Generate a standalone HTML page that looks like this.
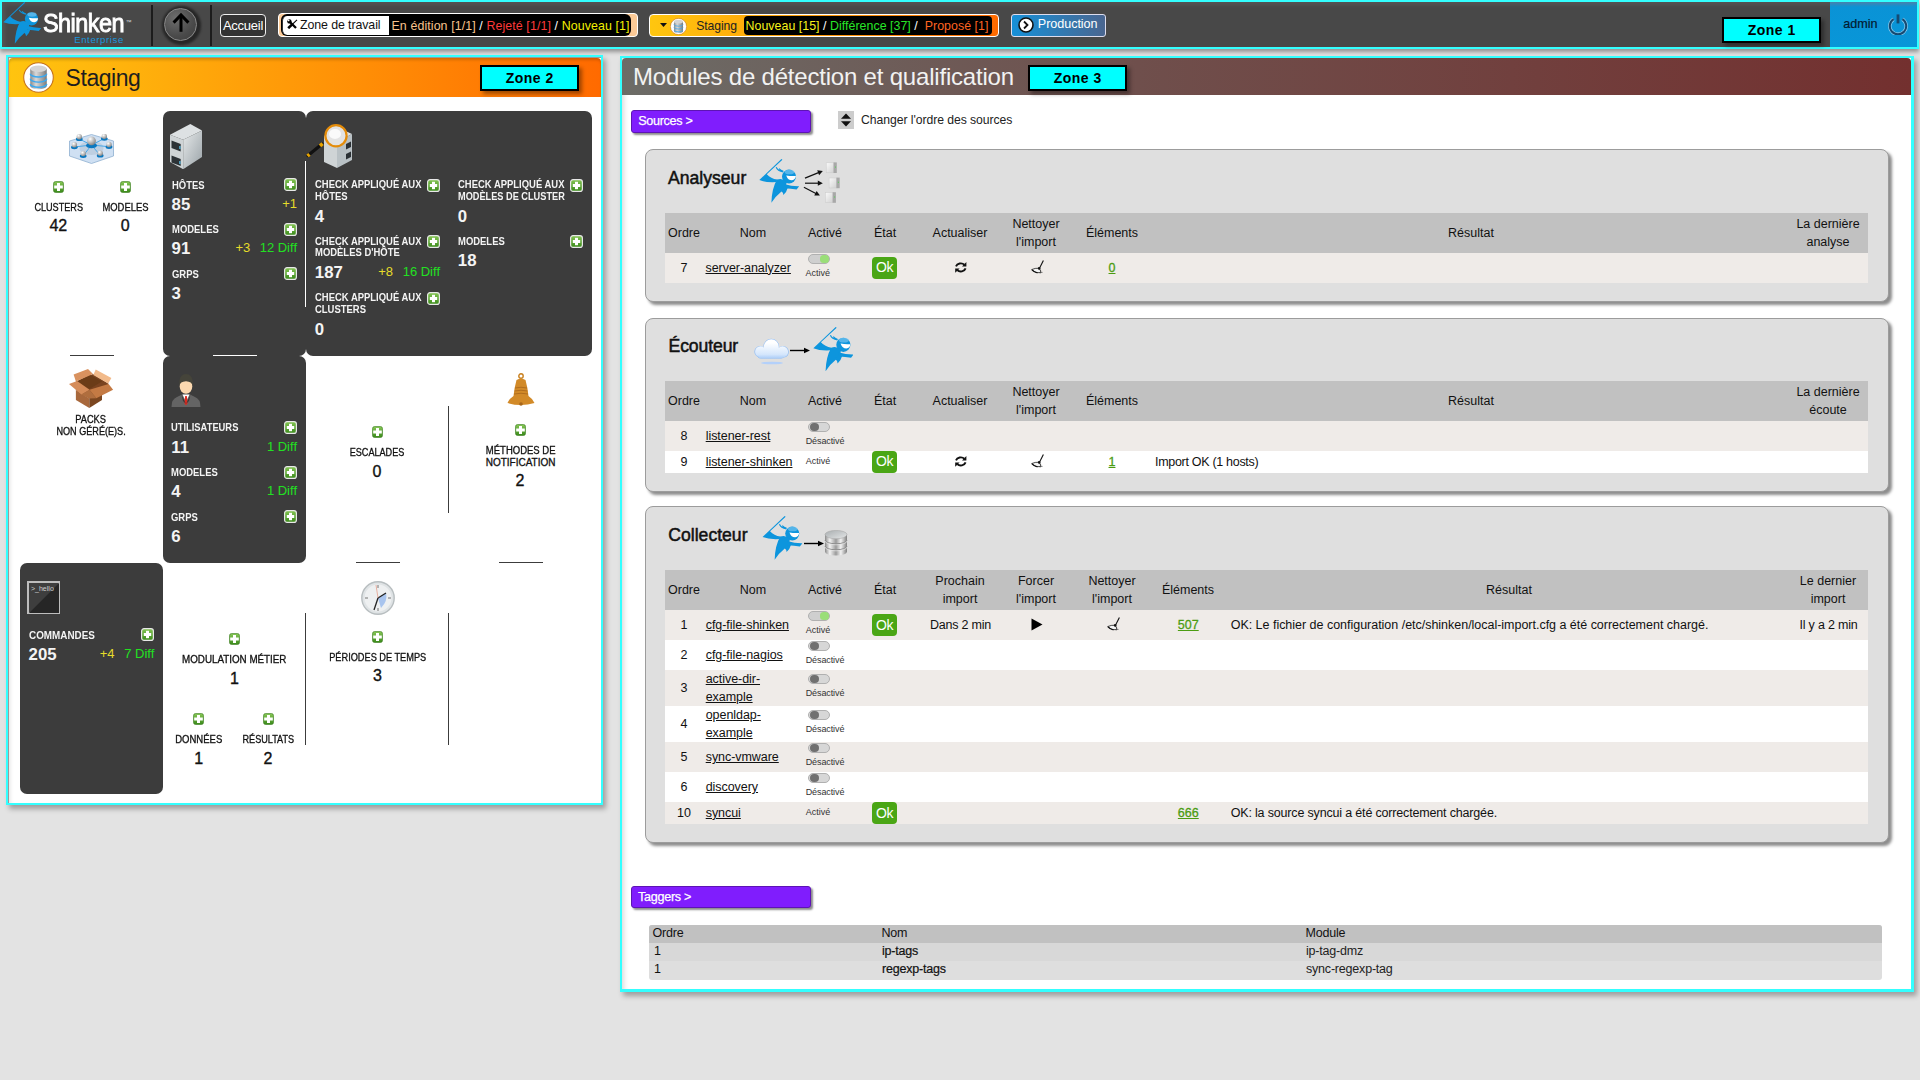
<!DOCTYPE html>
<html><head><meta charset="utf-8"><style>
*{box-sizing:border-box;margin:0;padding:0}
html,body{width:1920px;height:1080px;overflow:hidden;background:#e3e3e3;font-family:"Liberation Sans",sans-serif;color:#111}
.a{position:absolute}
.t{position:absolute;white-space:pre}
.zone{position:absolute;width:99px;height:26px;background:#00ffff;border:2px solid #000;font:bold 14px/22px "Liberation Sans",sans-serif;letter-spacing:0.5px;text-indent:0.5px;text-align:center;color:#000;box-shadow:3px 3px 4px rgba(0,0,0,.38)}
</style></head><body>

<svg width="0" height="0" style="position:absolute">
<defs>
 <linearGradient id="gplus" x1="0" y1="0" x2="0" y2="1"><stop offset="0" stop-color="#86c655"/><stop offset="1" stop-color="#3a8a1a"/></linearGradient>
 <linearGradient id="gsrv" x1="0" y1="0" x2="1" y2="1"><stop offset="0" stop-color="#e6e9ea"/><stop offset="1" stop-color="#9aa3a8"/></linearGradient>
 <radialGradient id="gball" cx=".35" cy=".3" r=".7"><stop offset="0" stop-color="#fff"/><stop offset="1" stop-color="#8a8a8a"/></radialGradient>
 <linearGradient id="gdb" x1="0" y1="0" x2="1" y2="0"><stop offset="0" stop-color="#8a8a8a"/><stop offset=".35" stop-color="#d8d8d8"/><stop offset="1" stop-color="#7a7a7a"/></linearGradient>
 <linearGradient id="gcloud" x1="0" y1="0" x2="0" y2="1"><stop offset="0.2" stop-color="#ffffff"/><stop offset="0.75" stop-color="#d4e6fc"/><stop offset="1" stop-color="#9cc4f6"/></linearGradient>
</defs>
<symbol id="plus" viewBox="0 0 11 12"><rect x=".5" y=".5" width="10" height="11" rx="2" fill="url(#gplus)" stroke="#3d7d22" stroke-width=".6"/><rect x="4" y="2" width="3" height="8" fill="#fff"/><rect x="1.2" y="4.5" width="8.6" height="3" fill="#fff"/></symbol>
<symbol id="plusw" viewBox="0 0 13 13"><rect x=".6" y=".6" width="11.8" height="11.8" rx="2.5" fill="url(#gplus)" stroke="#e8e8e8" stroke-width="1.2"/><rect x="5" y="2.8" width="3" height="7.4" fill="#fff"/><rect x="2.8" y="5" width="7.4" height="3" fill="#fff"/></symbol>
<symbol id="ninja" viewBox="0 0 40 44">
 <g fill="#0d95dd">
 <path d="M0.3,21.1 L22.4,0 L23.4,0.8 L7.8,15.2 Q11.8,19.6 18.2,20.6 L17.6,23.1 Q7,23.8 0.3,21.1 Z"/>
 <circle cx="30" cy="17.6" r="7"/>
 <path d="M18,20.6 Q23,18.5 27.5,22.5 Q28,28 22.5,32.5 Q16.8,37 12.4,43.8 Q12.8,29.5 18,20.6 Z"/>
 <path d="M21.6,31.4 Q24.5,28 29,28.3 Q27.8,33 24.3,36 Q24.2,33.2 21.6,31.4 Z"/>
 <path d="M25,25 Q33,27.4 40.2,27.2 L37.6,30.4 Q32,29.8 25.5,29.2 Z"/>
 </g>
 <path d="M17.2,8.2 Q18.6,11.8 24.2,12.9 M20,9.6 Q21.6,11.6 24.4,12.4" stroke="#0d95dd" stroke-width="1.1" fill="none"/>
 <ellipse cx="30.5" cy="13" rx="4.8" ry="2.3" fill="#8fd0f4" opacity=".55"/>
 <path d="M27.2,16.4 Q32,17.4 36.9,17 Q36.6,20.6 33,21.3 Q29,21.4 27.2,16.4 Z" fill="#fff"/>
</symbol>
<symbol id="cluster" viewBox="0 0 45 30">
 <polygon points="22.5,0.5 44.5,7 44.5,22 22.5,29.5 0.5,22 0.5,7" fill="#cfe0f3" stroke="#8fb0d0" stroke-width=".8"/>
 <ellipse cx="22.5" cy="14" rx="12" ry="7" fill="#b3c3d6" opacity=".6"/>
 <g stroke="#4aa8e8" stroke-width="1"><line x1="22.5" y1="11" x2="10.3" y2="5"/><line x1="22.5" y1="11" x2="35.3" y2="4.5"/><line x1="22.5" y1="11" x2="5.4" y2="13"/><line x1="22.5" y1="11" x2="40" y2="12.7"/><line x1="22.5" y1="11" x2="14.2" y2="21.8"/><line x1="22.5" y1="11" x2="31.2" y2="21.4"/></g>
 <g fill="#0a78c0"><ellipse cx="22.5" cy="11.5" rx="5.5" ry="2.8"/><ellipse cx="10.3" cy="5.2" rx="3.4" ry="1.9"/><ellipse cx="35.3" cy="4.8" rx="3.4" ry="1.9"/><ellipse cx="5.4" cy="13.3" rx="3.4" ry="1.9"/><ellipse cx="40" cy="13" rx="3.4" ry="1.9"/><ellipse cx="14.2" cy="22.1" rx="3.4" ry="1.9"/><ellipse cx="31.2" cy="21.7" rx="3.4" ry="1.9"/></g>
 <g fill="url(#gball)"><circle cx="22.5" cy="6.8" r="4.4"/><circle cx="10.3" cy="2.7" r="2.7"/><circle cx="35.3" cy="2.3" r="2.7"/><circle cx="5.4" cy="10.8" r="2.7"/><circle cx="40" cy="10.5" r="2.7"/><circle cx="14.2" cy="19.6" r="2.7"/><circle cx="31.2" cy="19.2" r="2.7"/></g>
</symbol>
<symbol id="server" viewBox="0 0 32 45">
 <polygon points="0,10.7 20.3,0 32,6.6 13.2,15.7" fill="#dde1e3"/>
 <polygon points="13.2,15.7 32,6.6 32,33 13.2,45.2" fill="url(#gsrv)"/>
 <polygon points="0,10.7 13.2,15.7 13.2,45.2 0,38" fill="#cfd4d6"/>
 <polygon points="1.5,16.5 10.7,20 10.7,27.5 1.5,24" fill="#2c3236"/>
 <polygon points="1.5,31.5 10.7,35 10.7,42 1.5,38.5" fill="#2c3236"/>
 <rect x="9.3" y="22" width="1.2" height="3" fill="#5bc6f0"/><rect x="9.3" y="37" width="1.2" height="3" fill="#5bc6f0"/>
</symbol>
<symbol id="magsrv" viewBox="0 0 46 46">
 <polygon points="18,14 33,6 46,12 31,20" fill="#dde1e3"/>
 <polygon points="31,20 46,12 46,38 31,46" fill="#b9c1c5"/>
 <polygon points="18,14 31,20 31,46 18,40" fill="#cfd4d6"/>
 <polygon points="40,22 45,19.5 45,25 40,27.5" fill="#2c3236"/><polygon points="40,32 45,29.5 45,35 40,37.5" fill="#2c3236"/>
 <line x1="2" y1="33.5" x2="16" y2="22" stroke="#111" stroke-width="3.2" stroke-linecap="round"/>
 <line x1="1.5" y1="34" x2="3.5" y2="32.3" stroke="#e8a400" stroke-width="3.6"/>
 <line x1="14" y1="23.8" x2="16.6" y2="21.6" stroke="#e8a400" stroke-width="3.6"/>
 <circle cx="30" cy="13.8" r="10.6" fill="#e3e3e3" stroke="#e48c0a" stroke-width="2.2"/>
 <ellipse cx="29" cy="12" rx="6" ry="5" fill="#fafafa"/>
</symbol>
<symbol id="user" viewBox="0 0 30 34">
 <path d="M0.5,33 Q0.5,25 6,23 L11,20.5 L19,20.5 L24,23 Q29.5,25 29.5,33 Z" fill="#646464"/>
 <polygon points="11.5,20.5 18.5,20.5 15,28" fill="#fff"/>
 <polygon points="14.2,22 15.8,22 16.8,29 15,31.5 13.2,29" fill="#e02a20"/>
 <path d="M10.5,20.5 L15,30 L12,27 Z" fill="#3a3a3a"/><path d="M19.5,20.5 L15,30 L18,27 Z" fill="#3a3a3a"/>
 <ellipse cx="15" cy="12.5" rx="6.3" ry="7.3" fill="#fcd9b0"/>
 <path d="M8.2,12 Q7.5,0 15,0 Q22.5,0 21.8,12 Q21,7.5 15,7.2 Q9,7.5 8.2,12 Z" fill="#45443a"/>
</symbol>
<symbol id="box" viewBox="0 0 45 40">
 <polygon points="6.9,12.4 24,4.9 39.2,14.4 39.6,14.9 33,25 27.3,29.2 20.3,29.5 6.9,21" fill="#7a4420"/>
 <polygon points="6.9,21 20.3,29.5 20.3,39 6.9,31" fill="#a8683c"/>
 <polygon points="20.3,29.5 33,21.5 33,31 20.3,39" fill="#7b4620"/>
 <polygon points="8,12.5 20.5,5.5 33,12.5 20.5,20" fill="#6b3c17"/><polygon points="12.5,25.5 20.5,20.8 27.3,29.2 20.3,29.5" fill="#b06e3e"/>
 <polygon points="4.6,5.4 19,0 24,4.9 6.9,12.4" fill="#d9925f"/>
 <polygon points="26.7,0.5 42.4,8.9 39.2,14.4 24.3,5.9" fill="#f2ba8a"/>
 <polygon points="0,14.9 8.1,11.9 20.5,20.8 12.5,25.5" fill="#d58c59"/>
 <polygon points="20.5,20.8 39.6,14.9 44.1,20.8 27.3,29.2" fill="#c47a44"/>
</symbol>
<symbol id="bell" viewBox="0 0 28 34">
 <circle cx="14" cy="3" r="2.2" fill="none" stroke="#c9801e" stroke-width="1.4"/>
 <path d="M9.5,7 Q14,4.5 18.5,7 Q20.5,14 21.5,23 Q26,26 27.5,30 Q14,34 0.5,30 Q2,26 6.5,23 Q7.5,14 9.5,7 Z" fill="#d28a28"/>
 <path d="M8,15 Q14,13.5 20,15 M7.5,18 Q14,16.5 20.5,18 M7,21 Q14,19.5 21,21" stroke="#a8661a" stroke-width=".8" fill="none"/>
 <circle cx="14" cy="31" r="1.8" fill="#a8661a"/>
</symbol>
<symbol id="term" viewBox="0 0 33 33">
 <rect x="1" y="1" width="31" height="31" fill="#2e2e2e" stroke="#bdbdbd" stroke-width="2"/>
 <polygon points="2,32 32,2 32,32" fill="#262626"/>
 <polygon points="2,2 32,2 2,32" fill="#3e3e3e"/>
 <text x="4" y="10" font-family="Liberation Sans" font-size="7" fill="#cfcfcf">&gt;_hello</text>
</symbol>
<symbol id="clock" viewBox="0 0 34 34">
 <circle cx="17" cy="17" r="16.2" fill="#dfe3e5" stroke="#b8bec0" stroke-width="1.4"/>
 <circle cx="17" cy="17" r="13.5" fill="#eef0f1"/>
 <path d="M17,17 L25,12 Q27,20 20,27 Z" fill="#a8c4ee"/>
 <g stroke="#555" stroke-width=".8"><line x1="17" y1="4" x2="17" y2="7"/><line x1="17" y1="27" x2="17" y2="30"/><line x1="4" y1="17" x2="7" y2="17"/><line x1="27" y1="17" x2="30" y2="17"/></g>
 <line x1="17" y1="17" x2="13" y2="29" stroke="#222" stroke-width="1.3"/>
 <line x1="17" y1="17" x2="25" y2="12" stroke="#222" stroke-width="1.3"/>
 <line x1="17" y1="17" x2="15" y2="4" stroke="#e07050" stroke-width=".5"/>
</symbol>
<symbol id="dbcirc" viewBox="0 0 30 30">
 <circle cx="15" cy="15" r="14.3" fill="#fff" stroke="#c4701a" stroke-width="1"/>
 <path d="M7,6.5 L7,23.2 A8,3.2 0 0 0 23,23.2 L23,6.5 Z" fill="url(#gdb)"/>
 <ellipse cx="15" cy="6.5" rx="8" ry="3.2" fill="#d4d4d4"/>
 <path d="M7,11.3 A8,3.2 0 0 0 23,11.3 M7,16.3 A8,3.2 0 0 0 23,16.3 M7,21.2 A8,3.2 0 0 0 23,21.2" stroke="#3aa8f0" stroke-width="1.4" fill="none"/>
</symbol>
<symbol id="db" viewBox="0 0 24 26">
 <linearGradient id="gdb2" x1="0" y1="0" x2="1" y2="0"><stop offset="0" stop-color="#8a8a8a"/><stop offset=".22" stop-color="#f2f2f2"/><stop offset=".5" stop-color="#9a9a9a"/><stop offset=".72" stop-color="#f2f2f2"/><stop offset="1" stop-color="#808080"/></linearGradient><linearGradient id="gdbt" x1="0" y1="0" x2="1" y2="1"><stop offset="0" stop-color="#a9aeb0"/><stop offset="1" stop-color="#e4e6e7"/></linearGradient>
 <path d="M1,4.6 L1,21.8 A11,3.8 0 0 0 23,21.8 L23,4.6 Z" fill="url(#gdb2)"/>
 <path d="M1,10 A11,3.8 0 0 0 23,10 M1,16 A11,3.8 0 0 0 23,16" stroke="#8c8c8c" stroke-width="1" fill="none"/>
 <path d="M1,11 A11,3.8 0 0 0 23,11 M1,17 A11,3.8 0 0 0 23,17" stroke="#e8e8e8" stroke-width=".7" fill="none"/>
 <ellipse cx="12" cy="4.6" rx="11" ry="4.2" fill="url(#gdbt)" stroke="#a0a0a0" stroke-width=".5"/>
</symbol>
<symbol id="cloud" viewBox="0 0 35 27">
 <clipPath id="cclip"><circle cx="6" cy="13.6" r="5.6"/><circle cx="17.3" cy="8.6" r="7.8"/><circle cx="29" cy="13.8" r="5.8"/><rect x="3" y="12" width="28" height="8.6" rx="4"/></clipPath>
 <g clip-path="url(#cclip)"><rect x="0" y="0" width="35" height="22" fill="#8fbcf4"/></g>
 <g transform="translate(0.7,0.6) scale(0.96)"><g clip-path="url(#cclip)"><rect x="0" y="0" width="35" height="22" fill="url(#gcloud)"/></g></g>
 <ellipse cx="18" cy="25" rx="11" ry="1.3" fill="#b3d0fa"/>
</symbol>
<symbol id="srvs" viewBox="0 0 18 42">
 <linearGradient id="gsv" x1="0" y1="0" x2="1" y2="1"><stop offset="0" stop-color="#fafafa"/><stop offset="1" stop-color="#d0d0d0"/></linearGradient>
 <g fill="url(#gsv)" stroke="#cacaca" stroke-width=".5"><rect x="2.2" y="1.8" width="8" height="10"/><rect x="5.1" y="17" width="8" height="10"/><rect x="1.3" y="31.5" width="8" height="10"/></g>
 <g fill="#a8a8a8"><rect x="9.5" y="1.4" width="3.3" height="10.6"/><rect x="12.4" y="16.6" width="3.3" height="10.6"/><rect x="8.6" y="31.2" width="3.3" height="10.6"/></g>
 <g fill="#5fd05f"><rect x="11" y="5.5" width="1" height="1.2"/><rect x="13.9" y="20.7" width="1" height="1.2"/><rect x="10.1" y="35.4" width="1" height="1.2"/></g>
</symbol>
<symbol id="refresh" viewBox="0 0 12 11">
 <path d="M1,4.4 A5,4.3 0 0 1 9.4,2.7" stroke="#111" stroke-width="1.9" fill="none"/>
 <polygon points="11.4,0 11.4,4.4 7,4.4" fill="#111"/>
 <path d="M10.6,6.4 A5,4.3 0 0 1 2.2,8.1" stroke="#111" stroke-width="1.9" fill="none"/>
 <polygon points="0.2,10.8 0.2,6.4 4.6,6.4" fill="#111"/>
</symbol>
<symbol id="broom" viewBox="0 0 14 14">
 <line x1="12.4" y1="0.6" x2="8.6" y2="8" stroke="#111" stroke-width="1.1"/>
 <path d="M0.6,9.6 Q4,8 8.2,8.2 Q9.6,10.5 10,12.8 Q4.5,13.6 0.6,9.6 Z" fill="#f4f4f4" stroke="#222" stroke-width=".8"/>
 <circle cx="8.2" cy="8.4" r="1.3" fill="#111"/>
 <path d="M1,9.9 Q3,12.4 6.5,12.9" stroke="#111" stroke-width="1.1" fill="none"/>
 <circle cx="9.6" cy="10.8" r=".55" fill="#333"/><circle cx="10.9" cy="12.3" r=".55" fill="#333"/><circle cx="8.9" cy="12.6" r=".5" fill="#333"/>
</symbol>
<symbol id="power" viewBox="0 0 20 22">
 <path d="M5.6,6.2 A8.2,8.2 0 1 0 14.4,6.2" stroke="#8fd0f2" stroke-width="3.4" fill="none"/>
 <path d="M5.6,6.2 A8.2,8.2 0 1 0 14.4,6.2" stroke="#164a72" stroke-width="2.1" fill="none"/>
 <rect x="8.6" y="1.4" width="2.8" height="9" fill="#164a72"/>
</symbol>
</svg>

<div class="a" style="left:0px;top:0px;width:1919px;height:49px;background:#33ffff;box-shadow:0 3px 4px rgba(0,0,0,.35)"></div>
<div class="a" style="left:2px;top:2px;width:1915px;height:45px;background:#484848;box-shadow:inset 3px 3px 4px rgba(255,255,255,.07)"></div>
<svg class="a" style="left:3px;top:2px;" width="38" height="42"><use href="#ninja"/></svg>
<div class="t" style="left:43.00px;top:11.21px;font-size:25.5px;line-height:25.5px;color:#fff;letter-spacing:-0.6px;-webkit-text-stroke:0.9px #fff;"><span style="display:inline-block;transform:scaleX(0.92);transform-origin:left center">Shinken</span></div>
<div class="t" style="left:125.50px;top:18.92px;font-size:6px;line-height:6px;color:#ddd;">™</div>
<div class="t" style="left:74.20px;top:35.27px;font-size:9.6px;line-height:9.6px;color:#1b95dc;letter-spacing:0.6px;">Enterprise</div>
<div class="a" style="left:151px;top:5px;width:2px;height:41px;background:#1c1c1c"></div>
<div class="a" style="left:210px;top:5px;width:2px;height:41px;background:#1c1c1c"></div>
<div class="a" style="left:162px;top:6px;width:39px;height:38.5px;border-radius:50%;background:#262626;filter:blur(1.3px)"></div>
<div class="a" style="left:164.2px;top:7.5px;width:33px;height:33px;border-radius:50%;background:radial-gradient(circle at 35% 30%,#6e6e6e,#4a4a4a 60%,#3c3c3c);border:1px solid #8a8a8a"></div>
<svg class="a" style="left:171px;top:12px" width="20" height="21"><path d="M10,3 L10,19.8" stroke="#000" stroke-width="3"/><path d="M2.6,10.6 L10,3 L17.4,10.6" stroke="#000" stroke-width="3" fill="none"/></svg>
<div class="a" style="left:220px;top:14px;width:46px;height:23px;background:#333;border:1px solid #f0f0f0;border-radius:4px"></div>
<div class="t" style="left:-57.00px;top:18.60px;width:600px;text-align:center;font-size:13px;line-height:13px;color:#fff;letter-spacing:-0.25px;">Accueil</div>
<div class="a" style="left:278px;top:13px;width:360px;height:24px;background:#fcca96;border:1px solid #fff;border-radius:4px"></div>
<div class="a" style="left:281px;top:14px;width:350px;height:22px;background:#000;border-radius:6px"></div>
<div class="a" style="left:281.5px;top:15.9px;width:107.5px;height:19px;background:#fff;border-radius:5px 0 0 5px;border-left:1.2px solid #333"></div>
<svg class="a" style="left:287px;top:19px" width="11" height="10"><path d="M2.2,2.2 L9,9" stroke="#000" stroke-width="2.3"/><circle cx="2.4" cy="2.4" r="2.2" fill="#000"/><circle cx="1.6" cy="1.4" r="0.9" fill="#fff"/><path d="M10,0.8 L5,5.6" stroke="#000" stroke-width="1.1"/><path d="M5.2,5.4 L1.2,9.2" stroke="#000" stroke-width="2.6"/></svg>
<div class="t" style="left:300.00px;top:18.90px;font-size:12.4px;line-height:12.4px;color:#111;letter-spacing:-0.1px;">Zone de travail</div>
<div class="t" style="left:391.5px;top:19.8px;font-size:12.4px;line-height:12.4px;letter-spacing:0.1px"><span style="color:#f9c48e">En édition [1/1]</span><span style="color:#fff"> / </span><span style="color:#ff3a3a">Rejeté [1/1]</span><span style="color:#fff"> / </span><span style="color:#f4f000">Nouveau [1]</span></div>
<div class="a" style="left:649px;top:14px;width:350px;height:23px;background:linear-gradient(90deg,#ffc60f,#ff6a00);border:1px solid #fff;border-radius:4px"></div>
<svg class="a" style="left:660px;top:23px" width="7" height="4"><polygon points="0,0 7,0 3.5,4" fill="#111"/></svg>
<svg class="a" style="left:669.5px;top:17.5px;" width="17" height="17"><use href="#dbcirc"/></svg>
<div class="t" style="left:696.30px;top:19.97px;font-size:12.2px;line-height:12.2px;color:#222;letter-spacing:-0.1px;">Staging</div>
<div class="a" style="left:744px;top:15.5px;width:248px;height:19.5px;background:#000;border-radius:4px"></div>
<div class="t" style="left:745.5px;top:19.9px;font-size:12.4px;line-height:12.4px;letter-spacing:0.03px"><span style="color:#f6f21a">Nouveau [15]</span><span style="color:#fff"> / </span><span style="color:#28e528">Différence [37]</span><span style="color:#fff"> /  </span><span style="color:#ff6420">Proposé [1]</span></div>
<div class="a" style="left:1011px;top:14px;width:95px;height:22.5px;background:linear-gradient(90deg,#1690d8,#4a6690);border:1px solid #dde;border-radius:3px"></div>
<svg class="a" style="left:1017.5px;top:17px" width="16" height="16"><circle cx="8" cy="8" r="7" fill="#fff" stroke="#111" stroke-width="1.6"/><path d="M6,4.5 L9.5,8 L6,11.5" stroke="#111" stroke-width="1.8" fill="none"/></svg>
<div class="t" style="left:1037.80px;top:17.63px;font-size:12.6px;line-height:12.6px;color:#fff;letter-spacing:-0.05px;">Production</div>
<div class="zone" style="left:1722px;top:17px">Zone 1</div>
<div class="a" style="left:1830px;top:2px;width:87px;height:45px;background:linear-gradient(180deg,#4a80aa 0,#0a93d6 5px,#0896d8)"></div>
<div class="t" style="left:1843.20px;top:17.63px;font-size:12.6px;line-height:12.6px;color:#021a30;-webkit-text-stroke:0.2px #021a30;">admin</div>
<svg class="a" style="left:1888px;top:13px;" width="20" height="22"><use href="#power"/></svg>
<div class="a" style="left:6px;top:55px;width:597px;height:750px;background:#33ffff;box-shadow:3px 4px 5px rgba(0,0,0,.3)"></div>
<div class="a" style="left:8px;top:57px;width:593px;height:746px;background:#fff;border-left:1px solid #9a9a9a;border-top:1px solid #9a9a9a;box-shadow:inset 4px 0 4px -3px rgba(0,0,0,.12)"></div>
<div class="a" style="left:9px;top:58px;width:592px;height:39px;background:linear-gradient(90deg,#ffc40f,#ff6a00);border-radius:4px 4px 0 0;box-shadow:inset 0 3px 3px -1px rgba(0,0,0,.18)"></div>
<svg class="a" style="left:23.1px;top:61.6px;" width="31" height="31"><use href="#dbcirc"/></svg>
<div class="t" style="left:65.60px;top:66.63px;font-size:23px;line-height:23px;color:#1e1e1e;letter-spacing:-0.45px;">Staging</div>
<div class="zone" style="left:480px;top:65px">Zone 2</div>
<div class="a" style="left:163px;top:111px;width:143px;height:245px;background:#3c3c3c;border-radius:7px"></div>
<div class="a" style="left:306px;top:111px;width:286px;height:244.5px;background:#3c3c3c;border-radius:7px"></div>
<div class="a" style="left:163px;top:356px;width:143px;height:207px;background:#3c3c3c;border-radius:7px"></div>
<div class="a" style="left:20px;top:563px;width:143px;height:231px;background:#3c3c3c;border-radius:7px"></div>
<div class="a" style="left:70px;top:355px;width:44px;height:1px;background:#3c3c3c"></div>
<div class="a" style="left:213px;top:355px;width:44px;height:1px;background:#fff"></div>
<div class="a" style="left:305px;top:161px;width:1px;height:146px;background:#fff"></div>
<div class="a" style="left:448px;top:406px;width:1px;height:107px;background:#3c3c3c"></div>
<div class="a" style="left:356px;top:562px;width:44px;height:1px;background:#3c3c3c"></div>
<div class="a" style="left:499px;top:562px;width:44px;height:1px;background:#3c3c3c"></div>
<div class="a" style="left:305px;top:613px;width:1px;height:132px;background:#3c3c3c"></div>
<div class="a" style="left:448px;top:613px;width:1px;height:132px;background:#3c3c3c"></div>
<svg class="a" style="left:69px;top:133.5px;" width="45" height="30"><use href="#cluster"/></svg>
<svg class="a" style="left:52.5px;top:181px;" width="11" height="12"><use href="#plus"/></svg>
<svg class="a" style="left:119.8px;top:181px;" width="11" height="12"><use href="#plus"/></svg>
<div class="t" style="left:-241.80px;top:202.63px;width:600px;text-align:center;font-size:10px;line-height:10px;color:#111;-webkit-text-stroke:0.3px #111;"><span style="display:inline-block;transform:scaleX(0.91);transform-origin:center center">CLUSTERS</span></div>
<div class="t" style="left:-174.50px;top:202.63px;width:600px;text-align:center;font-size:10px;line-height:10px;color:#111;-webkit-text-stroke:0.3px #111;"><span style="display:inline-block;transform:scaleX(0.94);transform-origin:center center">MODELES</span></div>
<div class="t" style="left:-241.70px;top:218.16px;width:600px;text-align:center;font-size:16px;line-height:16px;color:#111;-webkit-text-stroke:0.35px #111;">42</div>
<div class="t" style="left:-174.70px;top:218.16px;width:600px;text-align:center;font-size:16px;line-height:16px;color:#111;-webkit-text-stroke:0.35px #111;">0</div>
<svg class="a" style="left:169.6px;top:123.6px;" width="32" height="45"><use href="#server"/></svg>
<div class="t" style="left:171.60px;top:180.70px;font-size:10.4px;line-height:10.4px;color:#f4f4f4;font-weight:bold;"><span style="display:inline-block;transform:scaleX(0.91);transform-origin:left center">HÔTES</span></div>
<svg class="a" style="left:284.3px;top:178px;" width="13" height="13"><use href="#plusw"/></svg>
<div class="t" style="left:171.60px;top:196.98px;font-size:16.8px;line-height:16.8px;color:#f4f4f4;font-weight:bold;">85</div>
<div class="t" style="left:-303.00px;top:197.00px;width:600px;text-align:right;font-size:13px;line-height:13px;color:#e6dc2a;">+1</div>
<div class="t" style="left:171.60px;top:224.80px;font-size:10.4px;line-height:10.4px;color:#f4f4f4;font-weight:bold;"><span style="display:inline-block;transform:scaleX(0.91);transform-origin:left center">MODELES</span></div>
<svg class="a" style="left:284.3px;top:222.5px;" width="13" height="13"><use href="#plusw"/></svg>
<div class="t" style="left:171.60px;top:241.38px;font-size:16.8px;line-height:16.8px;color:#f4f4f4;font-weight:bold;">91</div>
<div class="t" style="left:-349.80px;top:241.10px;width:600px;text-align:right;font-size:13px;line-height:13px;color:#e6dc2a;">+3</div>
<div class="t" style="left:-303.00px;top:241.10px;width:600px;text-align:right;font-size:13px;line-height:13px;color:#22e022;">12 Diff</div>
<div class="t" style="left:171.60px;top:269.50px;font-size:10.4px;line-height:10.4px;color:#f4f4f4;font-weight:bold;"><span style="display:inline-block;transform:scaleX(0.91);transform-origin:left center">GRPS</span></div>
<svg class="a" style="left:284.3px;top:267.3px;" width="13" height="13"><use href="#plusw"/></svg>
<div class="t" style="left:171.60px;top:286.08px;font-size:16.8px;line-height:16.8px;color:#f4f4f4;font-weight:bold;">3</div>
<svg class="a" style="left:306px;top:122px;" width="46" height="46"><use href="#magsrv"/></svg>
<div class="t" style="left:314.80px;top:180.40px;font-size:10.4px;line-height:10.4px;color:#f4f4f4;font-weight:bold;"><span style="display:inline-block;transform:scaleX(0.91);transform-origin:left center">CHECK APPLIQUÉ AUX</span></div>
<div class="t" style="left:314.80px;top:191.90px;font-size:10.4px;line-height:10.4px;color:#f4f4f4;font-weight:bold;"><span style="display:inline-block;transform:scaleX(0.91);transform-origin:left center">HÔTES</span></div>
<svg class="a" style="left:427.3px;top:178.5px;" width="13" height="13"><use href="#plusw"/></svg>
<div class="t" style="left:314.80px;top:209.28px;font-size:16.8px;line-height:16.8px;color:#f4f4f4;font-weight:bold;">4</div>
<div class="t" style="left:314.80px;top:236.50px;font-size:10.4px;line-height:10.4px;color:#f4f4f4;font-weight:bold;"><span style="display:inline-block;transform:scaleX(0.91);transform-origin:left center">CHECK APPLIQUÉ AUX</span></div>
<div class="t" style="left:314.80px;top:248.30px;font-size:10.4px;line-height:10.4px;color:#f4f4f4;font-weight:bold;"><span style="display:inline-block;transform:scaleX(0.91);transform-origin:left center">MODÈLES D'HÔTE</span></div>
<svg class="a" style="left:427.3px;top:235px;" width="13" height="13"><use href="#plusw"/></svg>
<div class="t" style="left:314.80px;top:265.18px;font-size:16.8px;line-height:16.8px;color:#f4f4f4;font-weight:bold;">187</div>
<div class="t" style="left:-207.00px;top:264.90px;width:600px;text-align:right;font-size:13px;line-height:13px;color:#e6dc2a;">+8</div>
<div class="t" style="left:-160.00px;top:264.90px;width:600px;text-align:right;font-size:13px;line-height:13px;color:#22e022;">16 Diff</div>
<div class="t" style="left:314.80px;top:293.20px;font-size:10.4px;line-height:10.4px;color:#f4f4f4;font-weight:bold;"><span style="display:inline-block;transform:scaleX(0.91);transform-origin:left center">CHECK APPLIQUÉ AUX</span></div>
<div class="t" style="left:314.80px;top:305.30px;font-size:10.4px;line-height:10.4px;color:#f4f4f4;font-weight:bold;"><span style="display:inline-block;transform:scaleX(0.91);transform-origin:left center">CLUSTERS</span></div>
<svg class="a" style="left:427.3px;top:291.5px;" width="13" height="13"><use href="#plusw"/></svg>
<div class="t" style="left:314.80px;top:321.88px;font-size:16.8px;line-height:16.8px;color:#f4f4f4;font-weight:bold;">0</div>
<div class="t" style="left:457.80px;top:180.40px;font-size:10.4px;line-height:10.4px;color:#f4f4f4;font-weight:bold;"><span style="display:inline-block;transform:scaleX(0.91);transform-origin:left center">CHECK APPLIQUÉ AUX</span></div>
<div class="t" style="left:457.80px;top:191.90px;font-size:10.4px;line-height:10.4px;color:#f4f4f4;font-weight:bold;"><span style="display:inline-block;transform:scaleX(0.885);transform-origin:left center">MODÈLES DE CLUSTER</span></div>
<svg class="a" style="left:570.3px;top:178.5px;" width="13" height="13"><use href="#plusw"/></svg>
<div class="t" style="left:457.80px;top:208.98px;font-size:16.8px;line-height:16.8px;color:#f4f4f4;font-weight:bold;">0</div>
<div class="t" style="left:457.80px;top:236.70px;font-size:10.4px;line-height:10.4px;color:#f4f4f4;font-weight:bold;"><span style="display:inline-block;transform:scaleX(0.91);transform-origin:left center">MODELES</span></div>
<svg class="a" style="left:570.3px;top:235px;" width="13" height="13"><use href="#plusw"/></svg>
<div class="t" style="left:457.80px;top:252.98px;font-size:16.8px;line-height:16.8px;color:#f4f4f4;font-weight:bold;">18</div>
<svg class="a" style="left:69px;top:369px;" width="45" height="40"><use href="#box"/></svg>
<div class="t" style="left:-209.50px;top:414.84px;width:600px;text-align:center;font-size:10px;line-height:10px;color:#111;-webkit-text-stroke:0.3px #111;"><span style="display:inline-block;transform:scaleX(0.93);transform-origin:center center">PACKS</span></div>
<div class="t" style="left:-208.60px;top:426.64px;width:600px;text-align:center;font-size:10px;line-height:10px;color:#111;-webkit-text-stroke:0.3px #111;"><span style="display:inline-block;transform:scaleX(0.91);transform-origin:center center">NON GÉRÉ(E)S.</span></div>
<svg class="a" style="left:171px;top:374px;" width="30" height="34"><use href="#user"/></svg>
<div class="t" style="left:171.30px;top:423.40px;font-size:10.4px;line-height:10.4px;color:#f4f4f4;font-weight:bold;"><span style="display:inline-block;transform:scaleX(0.9);transform-origin:left center">UTILISATEURS</span></div>
<svg class="a" style="left:284.3px;top:421px;" width="13" height="13"><use href="#plusw"/></svg>
<div class="t" style="left:171.30px;top:440.18px;font-size:16.8px;line-height:16.8px;color:#f4f4f4;font-weight:bold;">11</div>
<div class="t" style="left:-303.00px;top:440.10px;width:600px;text-align:right;font-size:13px;line-height:13px;color:#22e022;">1 Diff</div>
<div class="t" style="left:171.30px;top:467.50px;font-size:10.4px;line-height:10.4px;color:#f4f4f4;font-weight:bold;"><span style="display:inline-block;transform:scaleX(0.91);transform-origin:left center">MODELES</span></div>
<svg class="a" style="left:284.3px;top:466px;" width="13" height="13"><use href="#plusw"/></svg>
<div class="t" style="left:171.30px;top:484.28px;font-size:16.8px;line-height:16.8px;color:#f4f4f4;font-weight:bold;">4</div>
<div class="t" style="left:-303.00px;top:484.20px;width:600px;text-align:right;font-size:13px;line-height:13px;color:#22e022;">1 Diff</div>
<div class="t" style="left:171.30px;top:512.70px;font-size:10.4px;line-height:10.4px;color:#f4f4f4;font-weight:bold;"><span style="display:inline-block;transform:scaleX(0.91);transform-origin:left center">GRPS</span></div>
<svg class="a" style="left:284.3px;top:510.2px;" width="13" height="13"><use href="#plusw"/></svg>
<div class="t" style="left:171.30px;top:529.08px;font-size:16.8px;line-height:16.8px;color:#f4f4f4;font-weight:bold;">6</div>
<svg class="a" style="left:371.8px;top:426px;" width="11" height="12"><use href="#plus"/></svg>
<div class="t" style="left:77.50px;top:447.54px;width:600px;text-align:center;font-size:10px;line-height:10px;color:#111;-webkit-text-stroke:0.3px #111;"><span style="display:inline-block;transform:scaleX(0.91);transform-origin:center center">ESCALADES</span></div>
<div class="t" style="left:77.00px;top:463.76px;width:600px;text-align:center;font-size:16px;line-height:16px;color:#111;-webkit-text-stroke:0.35px #111;">0</div>
<svg class="a" style="left:506.5px;top:373px;" width="28" height="34"><use href="#bell"/></svg>
<svg class="a" style="left:514.6px;top:424px;" width="11" height="12"><use href="#plus"/></svg>
<div class="t" style="left:220.60px;top:445.54px;width:600px;text-align:center;font-size:10px;line-height:10px;color:#111;-webkit-text-stroke:0.3px #111;"><span style="display:inline-block;transform:scaleX(0.95);transform-origin:center center">MÉTHODES DE</span></div>
<div class="t" style="left:220.60px;top:457.74px;width:600px;text-align:center;font-size:10px;line-height:10px;color:#111;-webkit-text-stroke:0.3px #111;">NOTIFICATION</div>
<div class="t" style="left:220.00px;top:473.16px;width:600px;text-align:center;font-size:16px;line-height:16px;color:#111;-webkit-text-stroke:0.35px #111;">2</div>
<svg class="a" style="left:26.5px;top:581px;" width="33" height="33"><use href="#term"/></svg>
<div class="t" style="left:28.55px;top:630.70px;font-size:10.4px;line-height:10.4px;color:#f4f4f4;font-weight:bold;"><span style="display:inline-block;transform:scaleX(0.95);transform-origin:left center">COMMANDES</span></div>
<svg class="a" style="left:141.3px;top:628px;" width="13" height="13"><use href="#plusw"/></svg>
<div class="t" style="left:28.55px;top:647.08px;font-size:16.8px;line-height:16.8px;color:#f4f4f4;font-weight:bold;">205</div>
<div class="t" style="left:-485.50px;top:647.40px;width:600px;text-align:right;font-size:13px;line-height:13px;color:#e6dc2a;">+4</div>
<div class="t" style="left:-445.70px;top:647.40px;width:600px;text-align:right;font-size:13px;line-height:13px;color:#22e022;">7 Diff</div>
<svg class="a" style="left:228.8px;top:633px;" width="11" height="12"><use href="#plus"/></svg>
<div class="t" style="left:-65.50px;top:655.28px;width:600px;text-align:center;font-size:10px;line-height:10px;color:#111;-webkit-text-stroke:0.3px #111;"><span style="display:inline-block;transform:scaleX(0.98);transform-origin:center center">MODULATION MÉTIER</span></div>
<div class="t" style="left:-65.50px;top:670.96px;width:600px;text-align:center;font-size:16px;line-height:16px;color:#111;-webkit-text-stroke:0.35px #111;">1</div>
<svg class="a" style="left:192.7px;top:713px;" width="11" height="12"><use href="#plus"/></svg>
<div class="t" style="left:-101.25px;top:735.28px;width:600px;text-align:center;font-size:10px;line-height:10px;color:#111;-webkit-text-stroke:0.3px #111;"><span style="display:inline-block;transform:scaleX(0.95);transform-origin:center center">DONNÉES</span></div>
<div class="t" style="left:-101.25px;top:750.71px;width:600px;text-align:center;font-size:16px;line-height:16px;color:#111;-webkit-text-stroke:0.35px #111;">1</div>
<svg class="a" style="left:262.6px;top:713px;" width="11" height="12"><use href="#plus"/></svg>
<div class="t" style="left:-31.90px;top:735.28px;width:600px;text-align:center;font-size:10px;line-height:10px;color:#111;-webkit-text-stroke:0.3px #111;"><span style="display:inline-block;transform:scaleX(0.91);transform-origin:center center">RÉSULTATS</span></div>
<div class="t" style="left:-32.00px;top:750.71px;width:600px;text-align:center;font-size:16px;line-height:16px;color:#111;-webkit-text-stroke:0.35px #111;">2</div>
<svg class="a" style="left:361px;top:580.5px;" width="34" height="34"><use href="#clock"/></svg>
<svg class="a" style="left:372.2px;top:631.3px;" width="11" height="12"><use href="#plus"/></svg>
<div class="t" style="left:77.60px;top:652.78px;width:600px;text-align:center;font-size:10px;line-height:10px;color:#111;-webkit-text-stroke:0.3px #111;"><span style="display:inline-block;transform:scaleX(0.92);transform-origin:center center">PÉRIODES DE TEMPS</span></div>
<div class="t" style="left:77.50px;top:668.46px;width:600px;text-align:center;font-size:16px;line-height:16px;color:#111;-webkit-text-stroke:0.35px #111;">3</div>
<div class="a" style="left:620px;top:56px;width:1294px;height:936px;background:#33ffff;box-shadow:3px 4px 5px rgba(0,0,0,.3)"></div>
<div class="a" style="left:622px;top:58px;width:1289px;height:931px;background:#fff;box-shadow:inset 6px 0 5px -4px rgba(0,0,0,.15)"></div>
<div class="a" style="left:622px;top:58px;width:1289px;height:37px;background:linear-gradient(90deg,#6c6c67,#6f4f4c 40%,#73302f);border-radius:4px 4px 0 0"></div>
<div class="t" style="left:633.00px;top:64.58px;font-size:24px;line-height:24px;color:#f2f2f2;letter-spacing:-0.2px;">Modules de détection et qualification</div>
<div class="zone" style="left:1028px;top:65px">Zone 3</div>
<div class="a" style="left:631px;top:110px;width:180px;height:22.5px;background:#801dfd;border:1px solid #5d14b4;border-radius:3px;box-shadow:2px 2px 2px rgba(0,0,0,.45)"></div>
<div class="t" style="left:638.20px;top:115.13px;font-size:12.6px;line-height:12.6px;color:#fff;letter-spacing:-0.3px;-webkit-text-stroke:0.25px #fff;">Sources &gt;</div>
<div class="a" style="left:838px;top:111px;width:16px;height:17.6px;background:#cdcdcd"></div>
<svg class="a" style="left:840px;top:113px" width="12" height="14"><polygon points="6,0.5 11,5.8 1,5.8" fill="#111"/><polygon points="6,13.5 11,8.2 1,8.2" fill="#111"/></svg>
<div class="t" style="left:861.00px;top:113.92px;font-size:12.2px;line-height:12.2px;color:#222;letter-spacing:-0.05px;">Changer l'ordre des sources</div>
<div class="a" style="left:645px;top:149px;width:1244px;height:153px;background:#dfdfdf;border:1px solid #9c9c9c;border-radius:8px;box-shadow:3px 3px 3px rgba(0,0,0,.45)"></div>
<div class="t" style="left:668.00px;top:169.90px;font-size:17.6px;line-height:17.6px;color:#111;-webkit-text-stroke:0.5px #111;">Analyseur</div>
<svg class="a" style="left:759px;top:158.6px;" width="40" height="44"><use href="#ninja"/></svg>
<svg class="a" style="left:800px;top:165px" width="26" height="34"><line x1="5.00" y1="13.10" x2="19.09" y2="7.40" stroke="#111" stroke-width="1.2"/><polygon points="22.80,5.90 19.14,10.19 17.19,5.36" fill="#111"/><line x1="5.00" y1="18.20" x2="18.80" y2="18.20" stroke="#111" stroke-width="1.2"/><polygon points="22.80,18.20 17.80,20.80 17.80,15.60" fill="#111"/><line x1="3.90" y1="22.20" x2="16.36" y2="28.74" stroke="#111" stroke-width="1.2"/><polygon points="19.90,30.60 14.26,30.58 16.68,25.97" fill="#111"/></svg>
<svg class="a" style="left:824px;top:161px;" width="18" height="42"><use href="#srvs"/></svg>
<div class="a" style="left:665px;top:213px;width:1203px;height:40px;background:#c1c1c1"></div>
<div class="t" style="left:584.00px;top:226.92px;width:200px;text-align:center;font-size:12.5px;line-height:12.5px;color:#111;">Ordre</div>
<div class="t" style="left:653.00px;top:226.92px;width:200px;text-align:center;font-size:12.5px;line-height:12.5px;color:#111;">Nom</div>
<div class="t" style="left:725.00px;top:226.92px;width:200px;text-align:center;font-size:12.5px;line-height:12.5px;color:#111;">Activé</div>
<div class="t" style="left:785.00px;top:226.92px;width:200px;text-align:center;font-size:12.5px;line-height:12.5px;color:#111;">État</div>
<div class="t" style="left:860.00px;top:226.92px;width:200px;text-align:center;font-size:12.5px;line-height:12.5px;color:#111;">Actualiser</div>
<div class="t" style="left:936.00px;top:218.12px;width:200px;text-align:center;font-size:12.5px;line-height:12.5px;color:#111;">Nettoyer</div>
<div class="t" style="left:936.00px;top:235.62px;width:200px;text-align:center;font-size:12.5px;line-height:12.5px;color:#111;">l'import</div>
<div class="t" style="left:1012.00px;top:226.92px;width:200px;text-align:center;font-size:12.5px;line-height:12.5px;color:#111;">Éléments</div>
<div class="t" style="left:1371.00px;top:226.92px;width:200px;text-align:center;font-size:12.5px;line-height:12.5px;color:#111;">Résultat</div>
<div class="t" style="left:1728.00px;top:218.12px;width:200px;text-align:center;font-size:12.5px;line-height:12.5px;color:#111;">La dernière</div>
<div class="t" style="left:1728.00px;top:235.62px;width:200px;text-align:center;font-size:12.5px;line-height:12.5px;color:#111;">analyse</div>
<div class="a" style="left:665px;top:253px;width:1203px;height:30px;background:#efebe8"></div>
<div class="t" style="left:664.00px;top:261.92px;width:40px;text-align:center;font-size:12.5px;line-height:12.5px;color:#111;">7</div>
<div class="t" style="left:705.50px;top:261.92px;font-size:12.5px;line-height:12.5px;color:#111;letter-spacing:-0.05px;text-decoration:underline;">server-analyzer</div>
<div class="a" style="left:808px;top:253.8px;width:22px;height:10px;border-radius:5px;background:#cfcfcf;border:1px solid #b0b0b0"><div class="a" style="left:11px;top:0px;width:9px;height:8px;border-radius:3.5px;background:#9ade78"></div></div>
<div class="t" style="left:805.50px;top:269.38px;font-size:9px;line-height:9px;color:#333;">Activé</div>
<div class="a" style="left:872px;top:257px;width:25px;height:21.5px;border-radius:4px;background:#4aa615"></div>
<div class="t" style="left:864.50px;top:260.25px;width:40px;text-align:center;font-size:14px;line-height:14px;color:#fff;letter-spacing:-0.4px;">Ok</div>
<svg class="a" style="left:955px;top:262px;" width="12" height="11"><use href="#refresh"/></svg>
<svg class="a" style="left:1030.5px;top:259.5px;" width="14" height="14"><use href="#broom"/></svg>
<div class="t" style="left:1092.00px;top:261.92px;width:40px;text-align:center;font-size:12.5px;line-height:12.5px;color:#4b9c12;text-decoration:underline;-webkit-text-stroke:0.3px #4b9c12;">0</div>
<div class="a" style="left:645px;top:317.5px;width:1244px;height:174.5px;background:#dfdfdf;border:1px solid #9c9c9c;border-radius:8px;box-shadow:3px 3px 3px rgba(0,0,0,.45)"></div>
<div class="t" style="left:668.50px;top:337.90px;font-size:17.6px;line-height:17.6px;color:#111;letter-spacing:-0.1px;-webkit-text-stroke:0.5px #111;">Écouteur</div>
<svg class="a" style="left:754px;top:338px;" width="35" height="27"><use href="#cloud"/></svg>
<svg class="a" style="left:789px;top:345.5px" width="22" height="9"><line x1="1" y1="4.5" x2="16" y2="4.5" stroke="#000" stroke-width="1.4"/><polygon points="21,4.5 15,1.7 15,7.3" fill="#000"/></svg>
<svg class="a" style="left:812.5px;top:327px;" width="40.5" height="44.5"><use href="#ninja"/></svg>
<div class="a" style="left:665px;top:381px;width:1203px;height:40px;background:#c1c1c1"></div>
<div class="t" style="left:584.00px;top:394.92px;width:200px;text-align:center;font-size:12.5px;line-height:12.5px;color:#111;">Ordre</div>
<div class="t" style="left:653.00px;top:394.92px;width:200px;text-align:center;font-size:12.5px;line-height:12.5px;color:#111;">Nom</div>
<div class="t" style="left:725.00px;top:394.92px;width:200px;text-align:center;font-size:12.5px;line-height:12.5px;color:#111;">Activé</div>
<div class="t" style="left:785.00px;top:394.92px;width:200px;text-align:center;font-size:12.5px;line-height:12.5px;color:#111;">État</div>
<div class="t" style="left:860.00px;top:394.92px;width:200px;text-align:center;font-size:12.5px;line-height:12.5px;color:#111;">Actualiser</div>
<div class="t" style="left:936.00px;top:386.12px;width:200px;text-align:center;font-size:12.5px;line-height:12.5px;color:#111;">Nettoyer</div>
<div class="t" style="left:936.00px;top:403.62px;width:200px;text-align:center;font-size:12.5px;line-height:12.5px;color:#111;">l'import</div>
<div class="t" style="left:1012.00px;top:394.92px;width:200px;text-align:center;font-size:12.5px;line-height:12.5px;color:#111;">Éléments</div>
<div class="t" style="left:1371.00px;top:394.92px;width:200px;text-align:center;font-size:12.5px;line-height:12.5px;color:#111;">Résultat</div>
<div class="t" style="left:1728.00px;top:386.12px;width:200px;text-align:center;font-size:12.5px;line-height:12.5px;color:#111;">La dernière</div>
<div class="t" style="left:1728.00px;top:403.62px;width:200px;text-align:center;font-size:12.5px;line-height:12.5px;color:#111;">écoute</div>
<div class="a" style="left:665px;top:421px;width:1203px;height:30px;background:#efebe8"></div>
<div class="a" style="left:665px;top:451px;width:1203px;height:22px;background:#fff"></div>
<div class="t" style="left:664.00px;top:430.12px;width:40px;text-align:center;font-size:12.5px;line-height:12.5px;color:#111;">8</div>
<div class="t" style="left:705.70px;top:430.12px;font-size:12.5px;line-height:12.5px;color:#111;letter-spacing:-0.05px;text-decoration:underline;">listener-rest</div>
<div class="a" style="left:808px;top:421.6px;width:22px;height:10px;border-radius:5px;background:#d7d7d7;border:1px solid #b0b0b0"><div class="a" style="left:1px;top:0px;width:9px;height:8px;border-radius:4px;background:#707070"></div></div>
<div class="t" style="left:805.70px;top:437.38px;font-size:9px;line-height:9px;color:#333;letter-spacing:-0.1px;">Désactivé</div>
<div class="t" style="left:664.00px;top:456.12px;width:40px;text-align:center;font-size:12.5px;line-height:12.5px;color:#111;">9</div>
<div class="t" style="left:705.70px;top:456.12px;font-size:12.5px;line-height:12.5px;color:#111;letter-spacing:-0.05px;text-decoration:underline;">listener-shinken</div>
<div class="t" style="left:805.70px;top:457.38px;font-size:9px;line-height:9px;color:#333;">Activé</div>
<div class="a" style="left:872px;top:451px;width:25px;height:21.5px;border-radius:4px;background:#4aa615"></div>
<div class="t" style="left:864.50px;top:454.25px;width:40px;text-align:center;font-size:14px;line-height:14px;color:#fff;letter-spacing:-0.4px;">Ok</div>
<svg class="a" style="left:955px;top:456px;" width="12" height="11"><use href="#refresh"/></svg>
<svg class="a" style="left:1030.5px;top:453.8px;" width="14" height="14"><use href="#broom"/></svg>
<div class="t" style="left:1092.00px;top:456.12px;width:40px;text-align:center;font-size:12.5px;line-height:12.5px;color:#4b9c12;text-decoration:underline;-webkit-text-stroke:0.3px #4b9c12;">1</div>
<div class="t" style="left:1155.00px;top:456.12px;font-size:12.5px;line-height:12.5px;color:#111;letter-spacing:-0.3px;">Import OK (1 hosts)</div>
<div class="a" style="left:645px;top:506px;width:1244px;height:337px;background:#dfdfdf;border:1px solid #9c9c9c;border-radius:8px;box-shadow:3px 3px 3px rgba(0,0,0,.45)"></div>
<div class="t" style="left:668.30px;top:527.30px;font-size:17.6px;line-height:17.6px;color:#111;-webkit-text-stroke:0.5px #111;">Collecteur</div>
<svg class="a" style="left:762.3px;top:516px;" width="40.5" height="44"><use href="#ninja"/></svg>
<svg class="a" style="left:803px;top:538.8px" width="22" height="9"><line x1="1" y1="4.5" x2="16" y2="4.5" stroke="#000" stroke-width="1.4"/><polygon points="21,4.5 15,1.7 15,7.3" fill="#000"/></svg>
<svg class="a" style="left:823.5px;top:529.5px;" width="24" height="26"><use href="#db"/></svg>
<div class="a" style="left:665px;top:570px;width:1203px;height:40px;background:#c1c1c1"></div>
<div class="t" style="left:584.00px;top:583.92px;width:200px;text-align:center;font-size:12.5px;line-height:12.5px;color:#111;">Ordre</div>
<div class="t" style="left:653.00px;top:583.92px;width:200px;text-align:center;font-size:12.5px;line-height:12.5px;color:#111;">Nom</div>
<div class="t" style="left:725.00px;top:583.92px;width:200px;text-align:center;font-size:12.5px;line-height:12.5px;color:#111;">Activé</div>
<div class="t" style="left:785.00px;top:583.92px;width:200px;text-align:center;font-size:12.5px;line-height:12.5px;color:#111;">État</div>
<div class="t" style="left:860.00px;top:575.12px;width:200px;text-align:center;font-size:12.5px;line-height:12.5px;color:#111;">Prochain</div>
<div class="t" style="left:860.00px;top:592.62px;width:200px;text-align:center;font-size:12.5px;line-height:12.5px;color:#111;">import</div>
<div class="t" style="left:936.00px;top:575.12px;width:200px;text-align:center;font-size:12.5px;line-height:12.5px;color:#111;">Forcer</div>
<div class="t" style="left:936.00px;top:592.62px;width:200px;text-align:center;font-size:12.5px;line-height:12.5px;color:#111;">l'import</div>
<div class="t" style="left:1012.00px;top:575.12px;width:200px;text-align:center;font-size:12.5px;line-height:12.5px;color:#111;">Nettoyer</div>
<div class="t" style="left:1012.00px;top:592.62px;width:200px;text-align:center;font-size:12.5px;line-height:12.5px;color:#111;">l'import</div>
<div class="t" style="left:1088.00px;top:583.92px;width:200px;text-align:center;font-size:12.5px;line-height:12.5px;color:#111;">Éléments</div>
<div class="t" style="left:1409.00px;top:583.92px;width:200px;text-align:center;font-size:12.5px;line-height:12.5px;color:#111;">Résultat</div>
<div class="t" style="left:1728.00px;top:575.12px;width:200px;text-align:center;font-size:12.5px;line-height:12.5px;color:#111;">Le dernier</div>
<div class="t" style="left:1728.00px;top:592.62px;width:200px;text-align:center;font-size:12.5px;line-height:12.5px;color:#111;">import</div>
<div class="a" style="left:665px;top:610px;width:1203px;height:30px;background:#efebe8"></div>
<div class="a" style="left:665px;top:640px;width:1203px;height:30px;background:#fff"></div>
<div class="a" style="left:665px;top:670px;width:1203px;height:36px;background:#efebe8"></div>
<div class="a" style="left:665px;top:706px;width:1203px;height:36px;background:#fff"></div>
<div class="a" style="left:665px;top:742px;width:1203px;height:30px;background:#efebe8"></div>
<div class="a" style="left:665px;top:772px;width:1203px;height:30px;background:#fff"></div>
<div class="a" style="left:665px;top:802px;width:1203px;height:21.5px;background:#efebe8"></div>
<div class="t" style="left:664.00px;top:618.72px;width:40px;text-align:center;font-size:12.5px;line-height:12.5px;color:#111;">1</div>
<div class="t" style="left:705.70px;top:618.72px;font-size:12.5px;line-height:12.5px;color:#111;letter-spacing:-0.05px;text-decoration:underline;">cfg-file-shinken</div>
<div class="a" style="left:808px;top:611.0px;width:22px;height:10px;border-radius:5px;background:#cfcfcf;border:1px solid #b0b0b0"><div class="a" style="left:11px;top:0px;width:9px;height:8px;border-radius:3.5px;background:#9ade78"></div></div>
<div class="t" style="left:805.70px;top:625.68px;font-size:9px;line-height:9px;color:#333;">Activé</div>
<div class="a" style="left:872px;top:614.3px;width:25px;height:21.5px;border-radius:4px;background:#4aa615"></div>
<div class="t" style="left:864.50px;top:617.55px;width:40px;text-align:center;font-size:14px;line-height:14px;color:#fff;letter-spacing:-0.4px;">Ok</div>
<div class="t" style="left:900.50px;top:618.72px;width:120px;text-align:center;font-size:12.5px;line-height:12.5px;color:#111;letter-spacing:-0.2px;">Dans 2 min</div>
<svg class="a" style="left:1030.5px;top:618px" width="12" height="13"><polygon points="0.5,0.5 11.5,6.5 0.5,12.5" fill="#000"/></svg>
<svg class="a" style="left:1106.5px;top:616.5px;" width="14" height="14"><use href="#broom"/></svg>
<div class="t" style="left:1158.30px;top:618.72px;width:60px;text-align:center;font-size:12.5px;line-height:12.5px;color:#4b9c12;text-decoration:underline;-webkit-text-stroke:0.3px #4b9c12;">507</div>
<div class="t" style="left:1230.70px;top:618.72px;font-size:12.5px;line-height:12.5px;color:#111;letter-spacing:-0.02px;">OK: Le fichier de configuration /etc/shinken/local-import.cfg a été correctement chargé.</div>
<div class="t" style="left:1768.50px;top:618.72px;width:120px;text-align:center;font-size:12.5px;line-height:12.5px;color:#111;letter-spacing:-0.2px;">Il y a 2 min</div>
<div class="t" style="left:664.00px;top:648.72px;width:40px;text-align:center;font-size:12.5px;line-height:12.5px;color:#111;">2</div>
<div class="t" style="left:705.70px;top:648.72px;font-size:12.5px;line-height:12.5px;color:#111;letter-spacing:-0.05px;text-decoration:underline;">cfg-file-nagios</div>
<div class="a" style="left:808px;top:641.0px;width:22px;height:10px;border-radius:5px;background:#d7d7d7;border:1px solid #b0b0b0"><div class="a" style="left:1px;top:0px;width:9px;height:8px;border-radius:4px;background:#707070"></div></div>
<div class="t" style="left:805.70px;top:656.38px;font-size:9px;line-height:9px;color:#333;letter-spacing:-0.1px;">Désactivé</div>
<div class="t" style="left:664.00px;top:682.12px;width:40px;text-align:center;font-size:12.5px;line-height:12.5px;color:#111;">3</div>
<div class="t" style="left:705.70px;top:673.42px;font-size:12.5px;line-height:12.5px;color:#111;letter-spacing:-0.05px;text-decoration:underline;">active-dir-</div>
<div class="t" style="left:705.70px;top:691.12px;font-size:12.5px;line-height:12.5px;color:#111;letter-spacing:-0.05px;text-decoration:underline;">example</div>
<div class="a" style="left:808px;top:673.5999999999999px;width:22px;height:10px;border-radius:5px;background:#d7d7d7;border:1px solid #b0b0b0"><div class="a" style="left:1px;top:0px;width:9px;height:8px;border-radius:4px;background:#707070"></div></div>
<div class="t" style="left:805.70px;top:689.08px;font-size:9px;line-height:9px;color:#333;letter-spacing:-0.1px;">Désactivé</div>
<div class="t" style="left:664.00px;top:717.72px;width:40px;text-align:center;font-size:12.5px;line-height:12.5px;color:#111;">4</div>
<div class="t" style="left:705.70px;top:709.42px;font-size:12.5px;line-height:12.5px;color:#111;letter-spacing:-0.05px;text-decoration:underline;">openldap-</div>
<div class="t" style="left:705.70px;top:726.72px;font-size:12.5px;line-height:12.5px;color:#111;letter-spacing:-0.05px;text-decoration:underline;">example</div>
<div class="a" style="left:808px;top:709.5999999999999px;width:22px;height:10px;border-radius:5px;background:#d7d7d7;border:1px solid #b0b0b0"><div class="a" style="left:1px;top:0px;width:9px;height:8px;border-radius:4px;background:#707070"></div></div>
<div class="t" style="left:805.70px;top:725.08px;font-size:9px;line-height:9px;color:#333;letter-spacing:-0.1px;">Désactivé</div>
<div class="t" style="left:664.00px;top:751.12px;width:40px;text-align:center;font-size:12.5px;line-height:12.5px;color:#111;">5</div>
<div class="t" style="left:705.70px;top:751.12px;font-size:12.5px;line-height:12.5px;color:#111;letter-spacing:-0.05px;text-decoration:underline;">sync-vmware</div>
<div class="a" style="left:808px;top:742.5999999999999px;width:22px;height:10px;border-radius:5px;background:#d7d7d7;border:1px solid #b0b0b0"><div class="a" style="left:1px;top:0px;width:9px;height:8px;border-radius:4px;background:#707070"></div></div>
<div class="t" style="left:805.70px;top:758.08px;font-size:9px;line-height:9px;color:#333;letter-spacing:-0.1px;">Désactivé</div>
<div class="t" style="left:664.00px;top:781.12px;width:40px;text-align:center;font-size:12.5px;line-height:12.5px;color:#111;">6</div>
<div class="t" style="left:705.70px;top:781.12px;font-size:12.5px;line-height:12.5px;color:#111;letter-spacing:-0.05px;text-decoration:underline;">discovery</div>
<div class="a" style="left:808px;top:772.5999999999999px;width:22px;height:10px;border-radius:5px;background:#d7d7d7;border:1px solid #b0b0b0"><div class="a" style="left:1px;top:0px;width:9px;height:8px;border-radius:4px;background:#707070"></div></div>
<div class="t" style="left:805.70px;top:788.08px;font-size:9px;line-height:9px;color:#333;letter-spacing:-0.1px;">Désactivé</div>
<div class="t" style="left:664.00px;top:806.72px;width:40px;text-align:center;font-size:12.5px;line-height:12.5px;color:#111;">10</div>
<div class="t" style="left:705.70px;top:806.72px;font-size:12.5px;line-height:12.5px;color:#111;letter-spacing:-0.05px;text-decoration:underline;">syncui</div>
<div class="t" style="left:805.70px;top:808.38px;font-size:9px;line-height:9px;color:#333;">Activé</div>
<div class="a" style="left:872px;top:802.3px;width:25px;height:21.5px;border-radius:4px;background:#4aa615"></div>
<div class="t" style="left:864.50px;top:805.55px;width:40px;text-align:center;font-size:14px;line-height:14px;color:#fff;letter-spacing:-0.4px;">Ok</div>
<div class="t" style="left:1158.30px;top:806.72px;width:60px;text-align:center;font-size:12.5px;line-height:12.5px;color:#4b9c12;text-decoration:underline;-webkit-text-stroke:0.3px #4b9c12;">666</div>
<div class="t" style="left:1230.70px;top:806.72px;font-size:12.5px;line-height:12.5px;color:#111;letter-spacing:-0.17px;">OK: la source syncui a été correctement chargée.</div>
<div class="a" style="left:631px;top:885.5px;width:180px;height:22.5px;background:#801dfd;border:1px solid #5d14b4;border-radius:3px;box-shadow:2px 2px 2px rgba(0,0,0,.45)"></div>
<div class="t" style="left:638.10px;top:890.58px;font-size:12.6px;line-height:12.6px;color:#fff;letter-spacing:-0.3px;-webkit-text-stroke:0.25px #fff;">Taggers &gt;</div>
<div class="a" style="left:649px;top:925px;width:1233px;height:54.7px;background:#dedede;border-radius:3px;overflow:hidden"></div>
<div class="a" style="left:649px;top:925px;width:1233px;height:18px;background:#c1c1c1;border-radius:3px 3px 0 0"></div>
<div class="a" style="left:649px;top:943px;width:1233px;height:18px;background:#d8d8d8"></div>
<div class="t" style="left:652.50px;top:927.42px;font-size:12.5px;line-height:12.5px;color:#111;letter-spacing:-0.2px;">Ordre</div>
<div class="t" style="left:881.50px;top:927.42px;font-size:12.5px;line-height:12.5px;color:#111;letter-spacing:-0.2px;">Nom</div>
<div class="t" style="left:1305.50px;top:927.42px;font-size:12.5px;line-height:12.5px;color:#111;letter-spacing:-0.2px;">Module</div>
<div class="t" style="left:654.00px;top:945.17px;font-size:12.5px;line-height:12.5px;color:#111;">1</div>
<div class="t" style="left:882.00px;top:945.17px;font-size:12.5px;line-height:12.5px;color:#111;letter-spacing:-0.2px;-webkit-text-stroke:0.2px #111;">ip-tags</div>
<div class="t" style="left:1306.00px;top:945.17px;font-size:12.5px;line-height:12.5px;color:#222;letter-spacing:-0.2px;">ip-tag-dmz</div>
<div class="t" style="left:654.00px;top:963.17px;font-size:12.5px;line-height:12.5px;color:#111;">1</div>
<div class="t" style="left:882.00px;top:963.17px;font-size:12.5px;line-height:12.5px;color:#111;letter-spacing:-0.2px;-webkit-text-stroke:0.2px #111;">regexp-tags</div>
<div class="t" style="left:1306.00px;top:963.17px;font-size:12.5px;line-height:12.5px;color:#222;letter-spacing:-0.2px;">sync-regexp-tag</div>
</body></html>
